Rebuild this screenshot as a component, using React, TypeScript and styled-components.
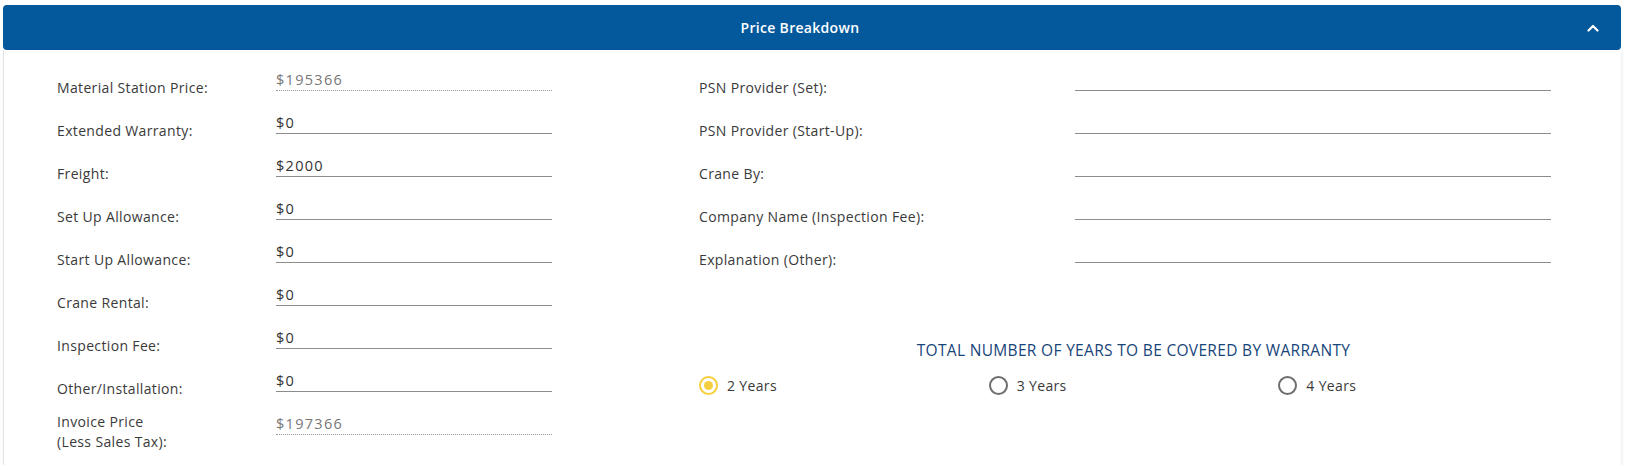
import React from "react";
import styled, { createGlobalStyle } from "styled-components";

const GlobalStyle = createGlobalStyle`
  html, body {
    margin: 0;
    padding: 0;
    background: #ffffff;
    overflow: hidden;
  }
  body {
    font-family: "Open Sans", "Liberation Sans", sans-serif;
    color: #3a3a3a;
  }
  * { box-sizing: border-box; }
`;

const Page = styled.div`
  padding: 5px 7px 0 3px;
`;

const Panel = styled.section`
  background: #fff;
`;

const Header = styled.header`
  height: 45px;
  background: #04599c;
  border-radius: 4px;
  display: flex;
  align-items: center;
  padding-left: 16px;
  color: #fff;
`;

const HeaderTitle = styled.h2`
  flex: 1;
  margin: 0;
  text-align: center;
  font-size: 14px;
  font-weight: 600;
  letter-spacing: 0.3px;
`;

const Toggle = styled.button`
  width: 24px;
  height: 24px;
  margin-right: 16px;
  padding: 0;
  border: 0;
  background: transparent;
  display: flex;
  align-items: center;
  justify-content: center;
  cursor: pointer;
`;

const Body = styled.div`
  display: grid;
  grid-template-columns: 495px 869px;
  column-gap: 147px;
  padding: 20px 0 40px 53px;
  border-left: 1px solid #e4e4e4;
  box-shadow: 1px 0 3px rgba(0, 0, 0, 0.08);
  min-height: 420px;
`;

const Column = styled.div`
  display: flex;
  flex-direction: column;
`;

const Row = styled.div<{ $label: number; $input: number }>`
  display: grid;
  grid-template-columns: ${(p) => p.$label}px ${(p) => p.$input}px;
  align-items: start;
  height: 43px;
`;

const Label = styled.label<{ $offset?: number }>`
  margin-top: ${(p) => p.$offset ?? 8}px;
  font-size: 14px;
  letter-spacing: 0.35px;
  line-height: 20px;
  color: #3a3a3a;
  white-space: nowrap;
`;

const Input = styled.input<{ $disabled?: boolean }>`
  width: 100%;
  height: 21px;
  padding: 0 0 1px 0;
  border: 0;
  border-bottom: 1px ${(p) => (p.$disabled ? "dotted" : "solid")}
    ${(p) => (p.$disabled ? "#9a9a9a" : "#8c8c8c")};
  background: transparent;
  font-family: "Open Sans", "Liberation Sans", sans-serif;
  font-size: 14.5px;
  letter-spacing: 1.3px;
  color: ${(p) => (p.$disabled ? "#777" : "#333")};
  outline: none;
`;

const Warranty = styled.div`
  margin-top: 55px;
  display: flex;
  flex-direction: column;
`;

const WarrantyTitle = styled.h3`
  margin: 0;
  text-align: center;
  font-size: 15.5px;
  line-height: 20px;
  font-weight: 500;
  color: #17457a;
  letter-spacing: 0.32px;
`;

const RadioGroup = styled.div`
  margin-top: 15px;
  display: grid;
  grid-template-columns: repeat(3, 1fr);
`;

const RadioOption = styled.label`
  display: flex;
  align-items: center;
  gap: 9px;
  height: 20px;
  font-size: 14px;
  letter-spacing: 0.35px;
  color: #3a3a3a;
  cursor: pointer;
`;

const RadioCircle = styled.span<{ $checked?: boolean }>`
  flex: none;
  width: 19px;
  height: 19px;
  border-radius: 50%;
  border: 2px solid ${(p) => (p.$checked ? "#f6cf3f" : "#6e6e6e")};
  display: flex;
  align-items: center;
  justify-content: center;
  &::after {
    content: "";
    width: 9px;
    height: 9px;
    border-radius: 50%;
    background: ${(p) => (p.$checked ? "#f6cf3f" : "transparent")};
  }
`;

const leftFields: { label: React.ReactNode; value: string; disabled?: boolean; offset?: number }[] = [
  { label: "Material Station Price:", value: "$195366", disabled: true },
  { label: "Extended Warranty:", value: "$0" },
  { label: "Freight:", value: "$2000" },
  { label: "Set Up Allowance:", value: "$0" },
  { label: "Start Up Allowance:", value: "$0" },
  { label: "Crane Rental:", value: "$0" },
  { label: "Inspection Fee:", value: "$0" },
  { label: "Other/Installation:", value: "$0" },
  {
    label: (
      <>
        Invoice Price
        <br />
        (Less Sales Tax):
      </>
    ),
    value: "$197366",
    disabled: true,
    offset: -2,
  },
];

const rightFields = [
  "PSN Provider (Set):",
  "PSN Provider (Start-Up):",
  "Crane By:",
  "Company Name (Inspection Fee):",
  "Explanation (Other):",
];

export default function App() {
  return (
    <>
      <GlobalStyle />
      <Page>
        <Panel>
          <Header>
            <HeaderTitle>Price Breakdown</HeaderTitle>
            <Toggle aria-label="Collapse">
              <svg width="12" height="8" viewBox="0 0 12 8">
                <polyline
                  points="1.5,6.5 6,2 10.5,6.5"
                  fill="none"
                  stroke="#fff"
                  strokeWidth="2.2"
                  strokeLinecap="round"
                  strokeLinejoin="round"
                />
              </svg>
            </Toggle>
          </Header>
          <Body>
            <Column>
              {leftFields.map((f, i) => (
                <Row key={i} $label={219} $input={276}>
                  <Label $offset={f.offset}>{f.label}</Label>
                  <Input
                    $disabled={f.disabled}
                    readOnly={f.disabled}
                    defaultValue={f.value}
                  />
                </Row>
              ))}
            </Column>
            <Column>
              {rightFields.map((l) => (
                <Row key={l} $label={376} $input={476}>
                  <Label>{l}</Label>
                  <Input defaultValue="" />
                </Row>
              ))}
              <Warranty>
                <WarrantyTitle>TOTAL NUMBER OF YEARS TO BE COVERED BY WARRANTY</WarrantyTitle>
                <RadioGroup>
                  {["2 Years", "3 Years", "4 Years"].map((y, i) => (
                    <RadioOption key={y}>
                      <RadioCircle $checked={i === 0} />
                      {y}
                    </RadioOption>
                  ))}
                </RadioGroup>
              </Warranty>
            </Column>
          </Body>
        </Panel>
      </Page>
    </>
  );
}
